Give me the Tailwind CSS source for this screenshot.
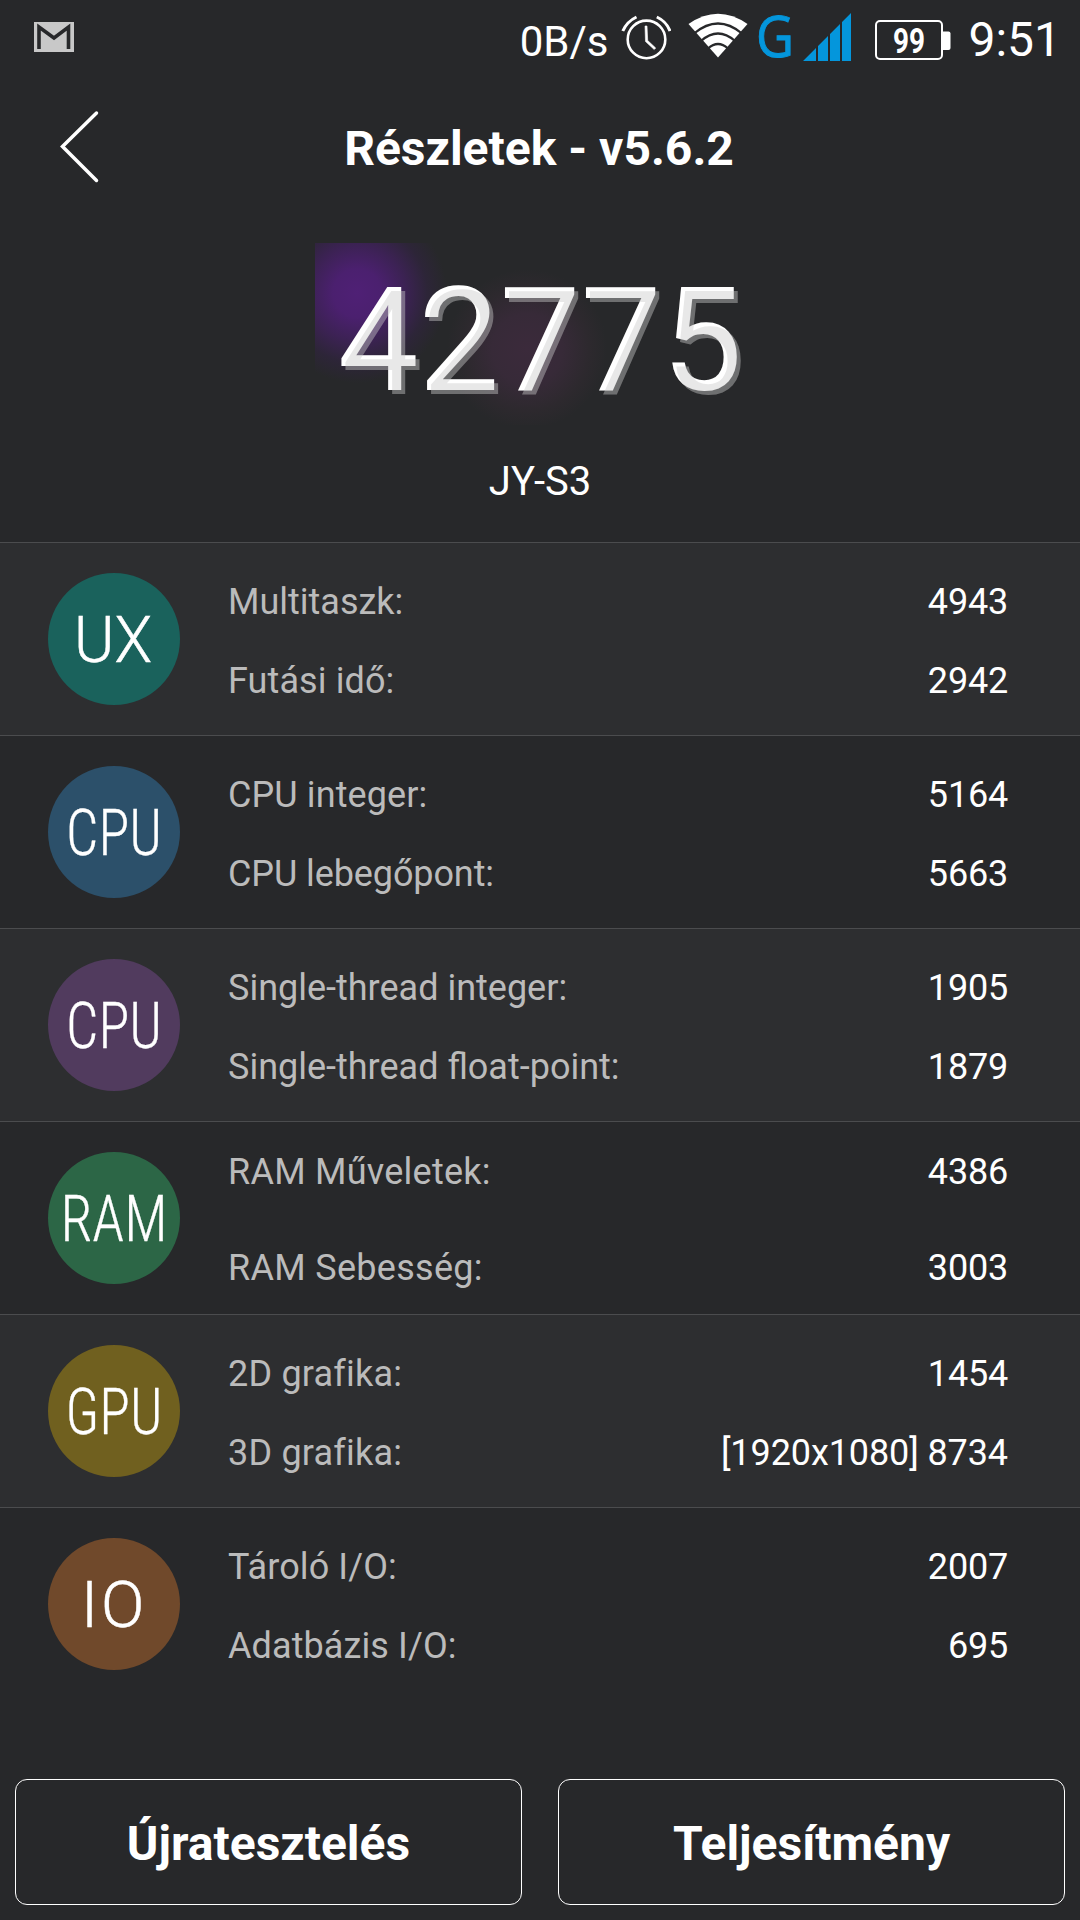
<!DOCTYPE html>
<html lang="hu">
<head>
  <meta charset="UTF-8" />
  <meta name="viewport" content="width=device-width, initial-scale=1.0" />
  <title>Részletek - v5.6.2</title>
  <script src="https://cdn.jsdelivr.net/npm/@tailwindcss/browser@4"></script>
</head>
<body class="bg-[#27282a] text-white font-[Roboto,sans-serif] overflow-hidden">
  <div class="w-[1080px] h-[1920px] flex flex-col">

    <!-- Status bar -->
    <div class="h-[75px] flex items-center justify-between pl-[34px] pr-[19px]">
      <svg class="w-10 h-[75px]" viewBox="0 0 40 75">
        <rect y="22" width="40" height="30" fill="#c8c8c8" />
        <path d="M5 49V27L20 38L34.500 27V49" fill="none" stroke="#27282a" stroke-width="3.600" />
      </svg>
      <div class="flex items-center">
        <span class="mt-2 text-[42px] leading-none">0B/s</span>
        <svg class="ml-[13px] w-[50px] h-[75px]" viewBox="621 0 50 75" fill="none" stroke="#fff">
          <circle cx="646.500" cy="39.400" r="18.800" stroke-width="2.600" />
          <path d="M622.800 31Q627 21.500 636.500 17M656.800 17Q666.500 21.500 670 31" stroke-width="3" />
          <path d="M645 26h2l.7 14.500 8 7.500-1.500 1.500-8.700-8z" fill="#fff" stroke="#fff" stroke-width=".6" />
        </svg>
        <svg class="ml-[17px] w-[60px] h-[75px]" viewBox="688 0 60 75">
          <path d="M718 57.500L688.500 24Q718 3.500 747.500 24Z" fill="#fff" />
          <g fill="none" stroke="#27282a" stroke-width="2.200">
            <path d="M694 33.500Q718 13.500 742 33.500" />
            <path d="M701 41Q718 26 735 41" />
            <path d="M708 48.500Q718 39.500 728 48.500" />
          </g>
        </svg>
        <svg class="ml-[9px] w-[38px] h-[75px] overflow-visible" viewBox="757 0 38 75">
          <text x="756" y="57" textLength="38" lengthAdjust="spacingAndGlyphs" class="font-['Open_Sans',sans-serif] text-[57px]" fill="#0496dc" stroke="#0496dc">G</text>
        </svg>
        <svg class="ml-2 w-12 h-[75px]" viewBox="803 0 48 75">
          <path d="M803 61L816 48V61ZM818 61V46L828 36V61ZM830 61V34L840 24V61ZM842 61V22L851 13V61Z" fill="#0496dc" />
        </svg>
        <svg class="ml-6 w-[76px] h-[75px]" viewBox="875 0 76 75">
          <rect x="876" y="21" width="66" height="38" rx="4" fill="none" stroke="#fff" stroke-width="2" />
          <path d="M943 31.500h5.500a2 2 0 0 1 2 2v14.500a2 2 0 0 1-2 2H943z" fill="#fff" />
          <text x="909" y="53" text-anchor="middle" textLength="32" lengthAdjust="spacingAndGlyphs" class="text-[35px] font-bold" fill="#fff">99</text>
        </svg>
        <span class="ml-[17px] mt-1 text-5xl leading-none">9:51</span>
      </div>
    </div>

    <!-- Header -->
    <div class="relative h-[147px] flex items-center justify-center pr-0.5">
      <svg class="absolute left-[58px] top-[35px] w-11 h-[73px]" viewBox="0 0 44 73" fill="none" stroke="#fff" stroke-width="3.500" stroke-linecap="round">
        <path d="M38.500 3L4.500 36.500L38.500 70.500" />
      </svg>
      <h1 class="text-5xl leading-none font-bold">Részletek - v5.6.2</h1>
    </div>

    <!-- Score -->
    <div class="relative h-[320px] flex flex-col items-center pt-[47px]">
      <div class="absolute left-[315px] top-[21px] w-[450px] h-[182px] bg-[radial-gradient(circle_at_42px_50px,#4f2075_0,#4b206f_24px,#3c2254_48px,#2d2538_70px,transparent_90px),radial-gradient(circle_at_212px_106px,#3b2a3b_0,#372a38_35px,#2d292e_62px,transparent_80px)]"></div>
      <div class="relative text-[144px] leading-none after:content-['42775'] after:absolute after:left-1 after:top-1 after:text-[rgba(203,203,203,0.44)]">42775</div>
      <div class="mt-[45px] text-[40px] leading-[48px]">JY-S3</div>
    </div>

    <!-- Results -->
    <div class="text-4xl text-[#bbbbbb]">
      <div class="h-[193px] flex items-center border-t border-[#4b4c4e] bg-[#2d2e30] pl-12 pr-[72px]">
        <svg class="w-[132px] h-[132px] rounded-full bg-[#1a625c]" viewBox="0 0 132 132">
          <text x="65" y="89" text-anchor="middle" textLength="78" lengthAdjust="spacingAndGlyphs" class="text-[64px] font-light" fill="#fff" stroke="#fff" stroke-width=".5">UX</text>
        </svg>
        <div class="flex-1 ml-12 mt-1.5">
          <div class="flex justify-between leading-[79px]"><span>Multitaszk:</span><span class="text-white tracking-[-0.2px]">4943</span></div>
          <div class="flex justify-between leading-[79px]"><span class="tracking-[0.1px]">Futási idő:</span><span class="text-white tracking-[-0.2px]">2942</span></div>
        </div>
      </div>

      <div class="h-[193px] flex items-center border-t border-[#4b4c4e] pl-12 pr-[72px]">
        <svg class="w-[132px] h-[132px] rounded-full bg-[#2c506a]" viewBox="0 0 132 132">
          <text x="66" y="89" text-anchor="middle" textLength="96" lengthAdjust="spacingAndGlyphs" class="font-['Roboto_Condensed',Roboto,sans-serif] text-[64px] font-light" fill="#fff" stroke="#fff" stroke-width=".3">CPU</text>
        </svg>
        <div class="flex-1 ml-12 mt-1.5">
          <div class="flex justify-between leading-[79px]"><span class="tracking-[0.1px]">CPU integer:</span><span class="text-white tracking-[-0.2px]">5164</span></div>
          <div class="flex justify-between leading-[79px]"><span class="tracking-[-0.1px]">CPU lebegőpont:</span><span class="text-white tracking-[-0.2px]">5663</span></div>
        </div>
      </div>

      <div class="h-[193px] flex items-center border-t border-[#4b4c4e] bg-[#2d2e30] pl-12 pr-[72px]">
        <svg class="w-[132px] h-[132px] rounded-full bg-[#513b5e]" viewBox="0 0 132 132">
          <text x="66" y="89" text-anchor="middle" textLength="96" lengthAdjust="spacingAndGlyphs" class="font-['Roboto_Condensed',Roboto,sans-serif] text-[64px] font-light" fill="#fff" stroke="#fff" stroke-width=".3">CPU</text>
        </svg>
        <div class="flex-1 ml-12 mt-1.5">
          <div class="flex justify-between leading-[79px]"><span>Single-thread integer:</span><span class="text-white tracking-[-0.2px]">1905</span></div>
          <div class="flex justify-between leading-[79px]"><span>Single-thread float-point:</span><span class="text-white tracking-[-0.2px]">1879</span></div>
        </div>
      </div>

      <div class="h-[193px] flex items-center border-t border-[#4b4c4e] pl-12 pr-[72px]">
        <svg class="w-[132px] h-[132px] rounded-full bg-[#2c6646]" viewBox="0 0 132 132">
          <text x="66" y="89" text-anchor="middle" textLength="107" lengthAdjust="spacingAndGlyphs" class="font-['Roboto_Condensed',Roboto,sans-serif] text-[64px] font-light" fill="#fff" stroke="#fff" stroke-width=".3">RAM</text>
        </svg>
        <div class="flex-1 ml-12 mt-1">
          <div class="flex justify-between leading-[96px]"><span class="tracking-[0.25px]">RAM Műveletek:</span><span class="text-white tracking-[-0.2px]">4386</span></div>
          <div class="flex justify-between leading-[96px]"><span class="tracking-[0.3px]">RAM Sebesség:</span><span class="text-white tracking-[-0.2px]">3003</span></div>
        </div>
      </div>

      <div class="h-[193px] flex items-center border-t border-[#4b4c4e] bg-[#2d2e30] pl-12 pr-[72px]">
        <svg class="w-[132px] h-[132px] rounded-full bg-[#70601f]" viewBox="0 0 132 132">
          <text x="66" y="89" text-anchor="middle" textLength="97" lengthAdjust="spacingAndGlyphs" class="font-['Roboto_Condensed',Roboto,sans-serif] text-[64px] font-light" fill="#fff" stroke="#fff" stroke-width=".3">GPU</text>
        </svg>
        <div class="flex-1 ml-12 mt-1.5">
          <div class="flex justify-between leading-[79px]"><span class="[font-variant-ligatures:common-ligatures] tracking-[0.2px]">2D grafika:</span><span class="text-white tracking-[-0.2px]">1454</span></div>
          <div class="flex justify-between leading-[79px]"><span class="[font-variant-ligatures:common-ligatures] tracking-[0.2px]">3D grafika:</span><span class="text-white tracking-[-0.1px]">[1920x1080] 8734</span></div>
        </div>
      </div>

      <div class="h-[193px] flex items-center border-t border-[#4b4c4e] pl-12 pr-[72px]">
        <svg class="w-[132px] h-[132px] rounded-full bg-[#70492b]" viewBox="0 0 132 132">
          <text x="33" y="89" class="text-[64px] font-light tracking-[3px]" fill="#fff" stroke="#fff" stroke-width=".5">IO</text>
        </svg>
        <div class="flex-1 ml-12 mt-1.5">
          <div class="flex justify-between leading-[79px]"><span class="tracking-[0.1px]">Tároló I/O:</span><span class="text-white tracking-[-0.2px]">2007</span></div>
          <div class="flex justify-between leading-[79px]"><span class="tracking-[0.1px]">Adatbázis I/O:</span><span class="text-white tracking-[-0.2px]">695</span></div>
        </div>
      </div>
    </div>

    <!-- Buttons -->
    <div class="mt-[79px] mx-[15px] flex gap-9 text-5xl font-bold">
      <button class="flex-1 h-[126px] pt-[3px] border border-white rounded-xl">Újratesztelés</button>
      <button class="flex-1 h-[126px] pt-[3px] border border-white rounded-xl">Teljesítmény</button>
    </div>
  </div>
</body>
</html>
